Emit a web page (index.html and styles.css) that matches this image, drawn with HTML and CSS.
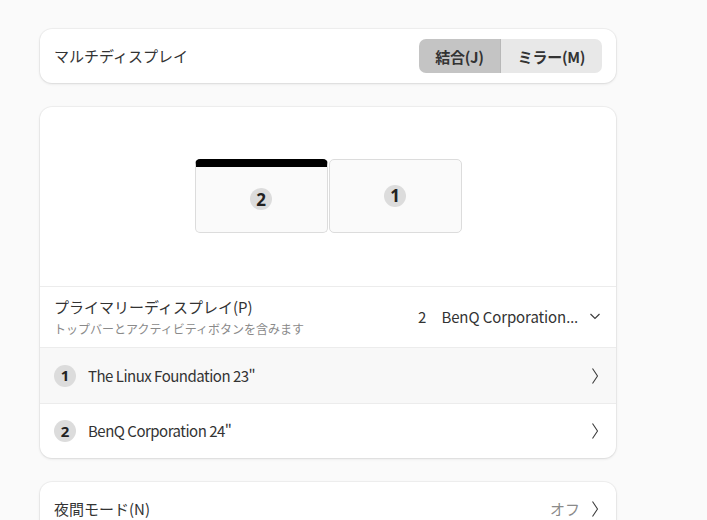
FILE: index.html
```html
<!DOCTYPE html>
<html lang="ja">
<head>
<meta charset="utf-8">
<link rel="stylesheet" href="styles.css">
</head>
<body>
<div class="page">
  <section class="card card-multi">
    <span class="label">マルチディスプレイ</span>
    <div class="seg">
      <button class="seg-btn active">結合(J)</button>
      <button class="seg-btn">ミラー(M)</button>
    </div>
  </section>

  <section class="card">
    <div class="arrange">
      <div class="monitor primary"><span class="badge">2</span></div>
      <div class="monitor"><span class="badge">1</span></div>
    </div>
    <div class="row primary-row">
      <div class="text-col">
        <span class="label">プライマリーディスプレイ(P)</span>
        <span class="sub">トップバーとアクティビティボタンを含みます</span>
      </div>
      <div class="dropdown">
        <span class="dd-num">2</span>
        <span class="dd-name">BenQ Corporation<span class="ell">…</span></span>
        <svg class="chev-down" width="16" height="16" viewBox="0 0 16 16"><path d="M3.5 6 L8 10.5 L12.5 6" fill="none" stroke="#3d3d3d" stroke-width="1.2"/></svg>
      </div>
    </div>
    <div class="row list-row hover">
      <span class="badge small">1</span>
      <span class="label grow latin">The Linux Foundation 23"</span>
      <svg class="chev" width="16" height="18" viewBox="0 0 16 18"><path d="M5.5 1.5 L10.5 9 L5.5 16.5" fill="none" stroke="#3d3d3d" stroke-width="1.1"/></svg>
    </div>
    <div class="row list-row">
      <span class="badge small">2</span>
      <span class="label grow latin">BenQ Corporation 24"</span>
      <svg class="chev" width="16" height="18" viewBox="0 0 16 18"><path d="M5.5 1.5 L10.5 9 L5.5 16.5" fill="none" stroke="#3d3d3d" stroke-width="1.1"/></svg>
    </div>
  </section>

  <section class="card card-night">
    <span class="label grow">夜間モード(N)</span>
    <span class="value">オフ</span>
    <svg class="chev" width="16" height="18" viewBox="0 0 16 18"><path d="M5.5 1.5 L10.5 9 L5.5 16.5" fill="none" stroke="#3d3d3d" stroke-width="1.1"/></svg>
  </section>
</div>
</body>
</html>
```

FILE: styles.css
```css
* { box-sizing: border-box; }
html, body {
  margin: 0;
  padding: 0;
  background: #fafafa;
  height: 520px;
  overflow: hidden;
}
body {
  font-family: "Noto Sans CJK JP", "Noto Sans", sans-serif;
  color: #303030;
  font-size: 15px;
}
.page {
  width: 576px;
  margin-left: 40px;
  padding-top: 29px;
  display: flex;
  flex-direction: column;
  gap: 24px;
}
.card {
  background: #ffffff;
  border-radius: 12px;
  box-shadow: 0 0 0 1px rgba(0,0,0,0.04), 0 1px 3px rgba(0,0,0,0.10);
  overflow: hidden;
}
.card-multi {
  height: 54px;
  padding: 0 14px;
  display: flex;
  align-items: center;
  justify-content: space-between;
}
.label {
  font-size: 15px;
  color: #333;
  line-height: 20px;
}
.latin {
  letter-spacing: -0.5px;
}
.ell {
  font-family: "Noto Sans", sans-serif;
  letter-spacing: 0;
}
.seg {
  display: flex;
  height: 34px;
  border-radius: 7px;
  overflow: hidden;
}
.seg-btn {
  border: none;
  margin: 0;
  font-family: inherit;
  font-size: 15px;
  font-weight: 700;
  color: #333;
  background: #e8e8e8;
  padding: 0;
  height: 34px;
  white-space: nowrap;
  letter-spacing: -0.3px;
}
.seg-btn.active {
  background: #c4c4c4;
  width: 82px;
  border-right: 1px solid #b8b8b8;
}
.seg-btn:last-child { width: 101px; }

.arrange {
  height: 180px;
  display: flex;
  align-items: center;
  justify-content: center;
  gap: 1px;
  padding-bottom: 2px;
  border-bottom: 1px solid #ececec;
}
.monitor {
  width: 133px;
  height: 74px;
  background: #fafafa;
  border: 1px solid #dcdcdc;
  border-radius: 5px;
  display: flex;
  align-items: center;
  justify-content: center;
}
.monitor.primary {
  border-top: 8px solid #000;
}
.badge {
  width: 22px;
  height: 22px;
  border-radius: 50%;
  background: #dcdcdc;
  color: #222;
  font-weight: 700;
  font-size: 17px;
  display: flex;
  align-items: center;
  justify-content: center;
  line-height: 1;
  font-family: "Noto Sans", sans-serif;
}
.badge.small {
  font-size: 15px;
  flex: none;
}
.row {
  display: flex;
  align-items: center;
  padding: 0 14px;
}
.primary-row {
  height: 61px;
  border-bottom: 1px solid #ececec;
  justify-content: space-between;
}
.text-col {
  display: flex;
  flex-direction: column;
}
.text-col .label { line-height: 20px; }
.sub {
  font-size: 12px;
  color: #8a8a8a;
  line-height: 18px;
  margin-top: 3px;
}
.dropdown {
  display: flex;
  align-items: center;
  color: #333;
  font-size: 15px;
  margin-bottom: 2px;
}
.dd-num { margin-right: 15px; }
.dd-name { margin-right: 9px; letter-spacing: -0.1px; }
.chev-down { margin-right: -1px; }
.list-row {
  height: 55px;
  gap: 12px;
}
.list-row + .list-row { border-top: 1px solid #ececec; height: 55px; }
.list-row.hover { background: #f8f8f8; }
.grow { flex: 1; }
.chev { flex: none; margin-right: -1px; }
.card-night {
  height: 60px;
  display: flex;
  padding: 0 14px 0 14px;
  align-items: flex-start;
  padding-top: 17px;
}
.card-night .value {
  color: #8a8a8a;
  margin-right: 7px;
  line-height: 20px;
}
.card-night .chev { margin-top: 1px; }
```
